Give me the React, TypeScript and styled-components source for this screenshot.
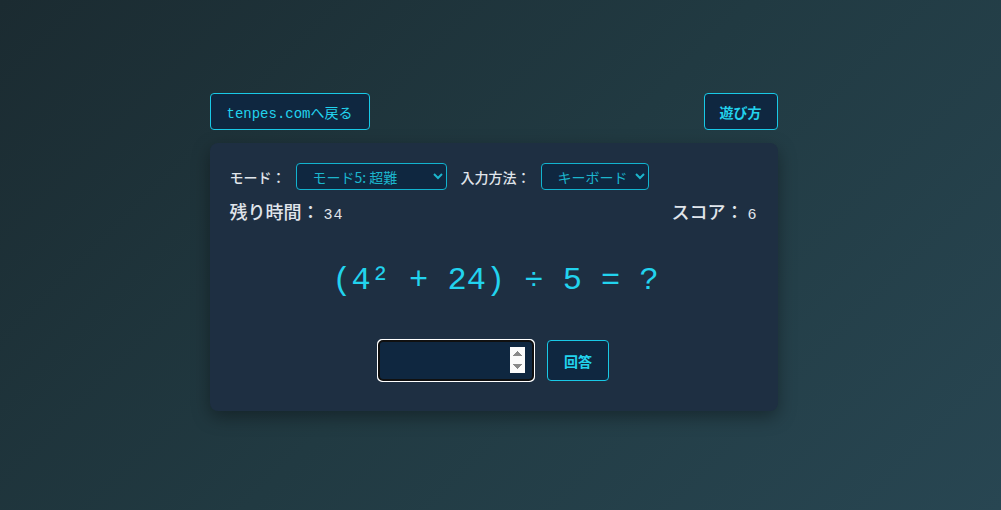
import React from "react";
import styled, { createGlobalStyle } from "styled-components";

const GlobalStyle = createGlobalStyle`
  html, body {
    margin: 0;
    height: 100%;
  }
  body {
    background: linear-gradient(135deg, #1b2b31 0%, #213a42 50%, #284652 100%);
    font-family: "Noto Sans CJK JP", "Noto Sans", sans-serif;
    color: #e2e8f0;
  }
  #root {
    height: 100%;
  }
`;

const Page = styled.div`
  height: 100%;
  display: flex;
  justify-content: center;
  align-items: flex-start;
  padding: 93px 14px 0 0;
  box-sizing: border-box;
`;

const Wrapper = styled.div`
  width: 568px;
  display: flex;
  flex-direction: column;
  gap: 13px;
`;

const TopBar = styled.div`
  display: flex;
  justify-content: space-between;
`;

const LinkButton = styled.button<{ $mono?: boolean }>`
  height: 37px;
  padding: 0 ${(p) => (p.$mono ? "16px" : "15px")};
  background: #0f2740;
  color: #22d3ee;
  border: 1px solid #19c9e6;
  border-radius: 4px;
  font-family: ${(p) =>
    p.$mono
      ? `"Liberation Mono", "Noto Sans CJK JP", monospace`
      : `"Noto Sans CJK JP", sans-serif`};
  font-size: 14px;
  font-weight: ${(p) => (p.$mono ? 400 : 700)};
  cursor: pointer;
`;

const Card = styled.div`
  background: #1e2f42;
  border-radius: 8px;
  padding: 20px 20px 30px;
  box-shadow: 0 6px 18px rgba(0, 0, 0, 0.35);
  display: flex;
  flex-direction: column;
`;

const Controls = styled.div`
  display: flex;
  align-items: center;
  height: 27px;
`;

const Label = styled.label`
  font-size: 14px;
  font-weight: 500;
  color: #e0e5eb;
  margin-right: 10px;
`;

const Select = styled.select<{ $w: number }>`
  width: ${(p) => p.$w}px;
  height: 27px;
  background: #0f2740;
  color: #1cb5cc;
  border: 1px solid #12b3cf;
  border-radius: 4px;
  font-family: "Noto Sans CJK JP", sans-serif;
  font-size: 14px;
  padding: 0 4px 0 12px;
  margin-right: 14px;
`;

const StatusRow = styled.div`
  display: flex;
  justify-content: space-between;
  align-items: baseline;
  margin-top: 8px;
`;

const Stat = styled.div`
  font-size: 18px;
  font-weight: 500;
  color: #e0e5eb;
`;

const StatValue = styled.span`
  font-family: "Liberation Mono", monospace;
  font-size: 15px;
  font-weight: 400;
  letter-spacing: 1px;
  margin-left: 4px;
`;

const Problem = styled.div`
  font-family: "Liberation Mono", monospace;
  font-size: 32px;
  color: #22d3ee;
  text-align: center;
  margin-top: 37px;
  height: 40px;
  line-height: 40px;
  padding-left: 4px;
`;

const AnswerRow = styled.div`
  display: flex;
  justify-content: center;
  align-items: center;
  gap: 13px;
  margin-top: 39px;
`;

const AnswerInput = styled.input`
  width: 156px;
  height: 41px;
  box-sizing: border-box;
  background: #0f2740;
  color: #22d3ee;
  caret-color: #22d3ee;
  border: 1px solid #19c9e6;
  border-radius: 4px;
  font-family: "Liberation Mono", monospace;
  font-size: 24px;
  text-align: center;
  padding: 0 8px;
`;

const SubmitButton = styled.button`
  width: 62px;
  height: 41px;
  background: #0f2740;
  color: #22d3ee;
  border: 1px solid #19c9e6;
  border-radius: 4px;
  font-family: "Noto Sans CJK JP", sans-serif;
  font-size: 14px;
  font-weight: 700;
  cursor: pointer;
`;

export default function App() {
  return (
    <>
      <GlobalStyle />
      <Page>
        <Wrapper>
          <TopBar>
            <LinkButton $mono>tenpes.comへ戻る</LinkButton>
            <LinkButton>遊び方</LinkButton>
          </TopBar>
          <Card>
            <Controls>
              <Label>モード：</Label>
              <Select $w={151} defaultValue="5">
                <option value="1">モード1: 簡単</option>
                <option value="2">モード2: 普通</option>
                <option value="3">モード3: 難しい</option>
                <option value="4">モード4: 激難</option>
                <option value="5">モード5: 超難</option>
              </Select>
              <Label>入力方法：</Label>
              <Select $w={108} defaultValue="keyboard">
                <option value="keyboard">キーボード</option>
                <option value="touch">タッチ</option>
              </Select>
            </Controls>
            <StatusRow>
              <Stat>
                残り時間：<StatValue>34</StatValue>
              </Stat>
              <Stat>
                スコア：<StatValue>6</StatValue>
              </Stat>
            </StatusRow>
            <Problem>(4² + 24) ÷ 5 = ?</Problem>
            <AnswerRow>
              <AnswerInput type="number" autoFocus />
              <SubmitButton>回答</SubmitButton>
            </AnswerRow>
          </Card>
        </Wrapper>
      </Page>
    </>
  );
}
